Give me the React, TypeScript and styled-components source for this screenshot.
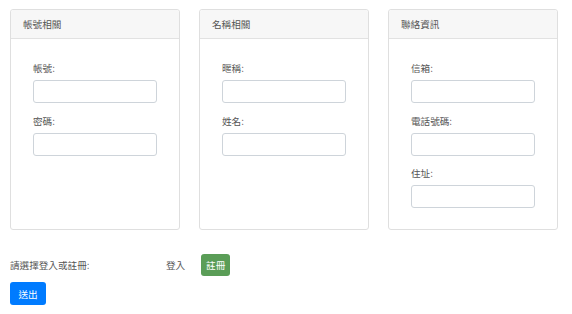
import React from "react";
import styled, { createGlobalStyle } from "styled-components";

const GlobalStyle = createGlobalStyle`
  body {
    margin: 0;
    background: #fff;
    font-family: "Noto Sans CJK TC", "Liberation Sans", sans-serif;
    font-size: 9.6px;
    color: #555;
  }
`;

const Page = styled.div`
  padding: 9px 10px 0;
`;

const CardRow = styled.div`
  display: flex;
  gap: 19px;
  align-items: stretch;
`;

const Card = styled.div`
  width: 170px;
  box-sizing: border-box;
  border: 1px solid #dfdfdf;
  border-radius: 3px;
  background: #fff;
`;

const CardHeader = styled.div`
  height: 28px;
  display: flex;
  align-items: center;
  padding-left: 12px;
  background: #f7f7f7;
  border-bottom: 1px solid #e2e2e2;
  border-radius: 3px 3px 0 0;
`;

const CardBody = styled.div`
  padding: 23px 22px 21px;
`;

const Field = styled.div`
  display: flex;
  flex-direction: column;
  & + & {
    margin-top: 11.5px;
  }
`;

const Label = styled.label`
  line-height: 12px;
  height: 12px;
  margin-bottom: 6px;
`;

const Input = styled.input`
  width: 124px;
  height: 23px;
  box-sizing: border-box;
  border: 1px solid #ced4da;
  border-radius: 3px;
  outline: none;
  padding: 0 6px;
`;

const ChoiceRow = styled.div`
  display: flex;
  align-items: center;
  margin-top: 24px;
`;

const ChoiceLabel = styled.span`
  width: 156px;
`;

const Option = styled.span`
  margin-right: 16px;
`;

const Button = styled.button<{ $variant: "success" | "primary" }>`
  border: none;
  border-radius: 3px;
  color: #fff;
  font-family: inherit;
  font-size: 9.6px;
  padding: 0;
  width: ${(p) => (p.$variant === "success" ? "29px" : "36px")};
  height: ${(p) => (p.$variant === "success" ? "22px" : "23px")};
  background: ${(p) => (p.$variant === "success" ? "#5a9d57" : "#007bff")};
`;

const SubmitRow = styled.div`
  margin-top: 6px;
`;

const sections = [
  { title: "帳號相關", fields: ["帳號:", "密碼:"] },
  { title: "名稱相關", fields: ["暱稱:", "姓名:"] },
  { title: "聯絡資訊", fields: ["信箱:", "電話號碼:", "住址:"] },
];

const App = () => (
  <Page>
    <GlobalStyle />
    <CardRow>
      {sections.map((s) => (
        <Card key={s.title}>
          <CardHeader>{s.title}</CardHeader>
          <CardBody>
            {s.fields.map((f) => (
              <Field key={f}>
                <Label>{f}</Label>
                <Input />
              </Field>
            ))}
          </CardBody>
        </Card>
      ))}
    </CardRow>
    <ChoiceRow>
      <ChoiceLabel>請選擇登入或註冊:</ChoiceLabel>
      <Option>登入</Option>
      <Button $variant="success">註冊</Button>
    </ChoiceRow>
    <SubmitRow>
      <Button $variant="primary">送出</Button>
    </SubmitRow>
  </Page>
);

export default App;
